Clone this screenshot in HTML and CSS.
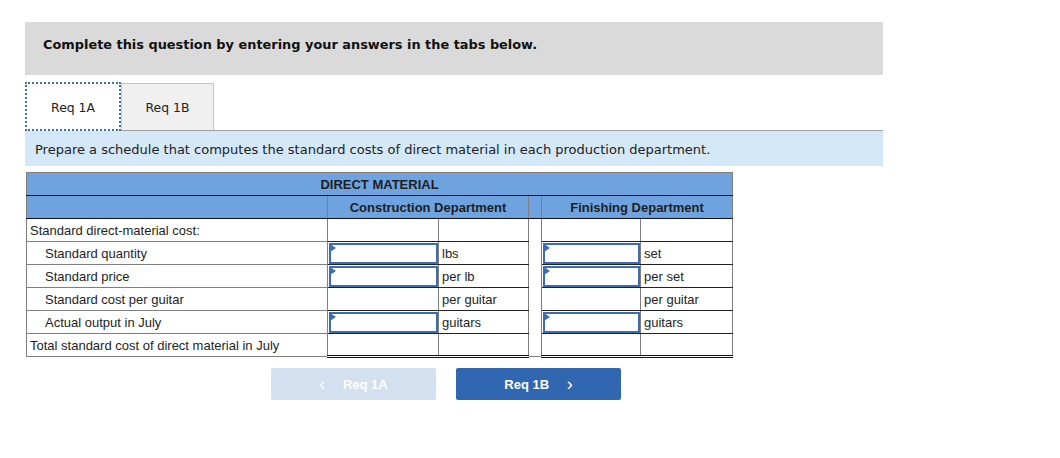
FILE: index.html
```html
<!DOCTYPE html>
<html lang="en">
<head>
    <meta charset="UTF-8">
    <title>Req 1A</title>
    <link rel="stylesheet" href="styles.css">
</head>
<body>
<div class="page">
    <div class="intro">Complete this question by entering your answers in the tabs below.</div>

    <div class="tabs">
        <div class="tab active">Req 1A</div>
        <div class="tab">Req 1B</div>
    </div>

    <div class="task">Prepare a schedule that computes the standard costs of direct material in each production department.</div>

    <table class="sheet">
        <colgroup>
            <col class="c-label">
            <col class="c-in1">
            <col class="c-unit1">
            <col class="c-gap">
            <col class="c-in2">
            <col class="c-unit2">
        </colgroup>
        <tr class="head">
            <th colspan="6">DIRECT MATERIAL</th>
        </tr>
        <tr class="head">
            <th></th>
            <th colspan="2">Construction Department</th>
            <th class="gap"></th>
            <th colspan="2">Finishing Department</th>
        </tr>
        <tr>
            <td class="label">Standard direct-material cost:</td>
            <td class="val"></td>
            <td class="val"></td>
            <td class="gap"></td>
            <td class="val"></td>
            <td class="val"></td>
        </tr>
        <tr>
            <td class="label sub">Standard quantity</td>
            <td class="val"><div class="inp"></div></td>
            <td class="val unit">lbs</td>
            <td class="gap"></td>
            <td class="val"><div class="inp"></div></td>
            <td class="val unit">set</td>
        </tr>
        <tr>
            <td class="label sub">Standard price</td>
            <td class="val"><div class="inp"></div></td>
            <td class="val unit">per lb</td>
            <td class="gap"></td>
            <td class="val"><div class="inp"></div></td>
            <td class="val unit">per set</td>
        </tr>
        <tr>
            <td class="label sub">Standard cost per guitar</td>
            <td class="val"></td>
            <td class="val unit">per guitar</td>
            <td class="gap"></td>
            <td class="val"></td>
            <td class="val unit">per guitar</td>
        </tr>
        <tr>
            <td class="label sub">Actual output in July</td>
            <td class="val"><div class="inp"></div></td>
            <td class="val unit">guitars</td>
            <td class="gap"></td>
            <td class="val"><div class="inp"></div></td>
            <td class="val unit">guitars</td>
        </tr>
        <tr class="total">
            <td class="label">Total standard cost of direct material in July</td>
            <td class="val"></td>
            <td class="val"></td>
            <td class="gap"></td>
            <td class="val"></td>
            <td class="val"></td>
        </tr>
    </table>

    <div class="nav">
        <button class="btn prev" disabled><span class="arrow">&lsaquo;</span> Req 1A</button>
        <button class="btn next">Req 1B <span class="arrow">&rsaquo;</span></button>
    </div>
</div>
</body>
</html>
```

FILE: styles.css
```css
body {
    margin: 0;
    padding: 0;
    background: #fff;
    font-family: "Liberation Sans", Arial, sans-serif;
    color: #222;
}
.page {
    margin: 22px 0 0 25px;
    width: 858px;
}
.intro {
    background-color: #dadada;
    height: 53px;
    line-height: 45px;
    padding-left: 18px;
    font-family: "DejaVu Sans", Verdana, sans-serif;
    font-weight: bold;
    font-size: 12.9px;
    color: #111;
}
.tabs {
    display: flex;
    align-items: flex-end;
    margin-top: 7px;
    border-bottom: 1px solid #a0a0a0;
}
.tab {
    font-family: "DejaVu Sans", Verdana, sans-serif;
    font-size: 12.4px;
    color: #222;
    box-sizing: border-box;
    text-align: center;
}
.tab.active {
    width: 96px;
    height: 49px;
    line-height: 47px;
    border: 2px dotted #3f6fb3;
    background: #fff;
    margin-bottom: -1px;
}
.tab + .tab {
    width: 93px;
    height: 47px;
    line-height: 47px;
    background: #f0f0f0;
    border: 1px solid #c6c6c6;
    border-bottom: none;
}
.task {
    background-color: #d5e8f7;
    height: 35px;
    line-height: 37px;
    padding-left: 10px;
    font-family: "DejaVu Sans", Verdana, sans-serif;
    font-size: 13px;
    color: #222;
}
.sheet {
    margin-top: 6px;
    margin-left: 1px;
    border-collapse: collapse;
    width: 707px;
    table-layout: fixed;
    font-size: 13px;
    border: 1px solid #7f7f7f;
}
.c-label { width: 301px; }
.c-in1 { width: 111px; }
.c-unit1 { width: 90px; }
.c-gap { width: 13px; }
.c-in2 { width: 99px; }
.c-unit2 { width: 92px; }

.head th {
    background-color: #6fa3e0;
    font-weight: bold;
    font-size: 13px;
    color: #1e1e1e;
    height: 22px;
    padding: 0;
    border-bottom: 1px solid #111;
    border-left: 1px solid #7f7f7f;
    text-align: center;
}
.head th.gap {
    border-left: 1px solid #7f7f7f;
    border-right: 1px solid #7f7f7f;
}
.sheet td {
    height: 22px;
    padding: 0;
    border-left: 1px solid #7f7f7f;
    border-bottom: 1px solid #7f7f7f;
}
.sheet td.label {
    padding-left: 3px;
    color: #1e1e1e;
}
.sheet td.sub {
    padding-left: 18px;
}
.sheet td.val {
    border-bottom-color: #222;
    position: relative;
}
.sheet td.unit {
    padding-left: 3px;
    color: #1e1e1e;
}
.sheet td.gap {
    border-bottom: none;
    border-right: 1px solid #7f7f7f;
}
.sheet tr.total td {
    height: 21px;
}
.sheet tr.total td.val {
    border-bottom: 3px double #111;
}
.inp {
    position: absolute;
    left: 1px;
    top: 1px;
    right: 0;
    bottom: 0;
    border: 2px solid #3c6db0;
    background: #fff;
}
.inp::before {
    content: "";
    position: absolute;
    left: -1px;
    top: -1px;
    border-top: 4px solid transparent;
    border-bottom: 4px solid transparent;
    border-left: 6px solid #3c6db0;
}
.nav {
    display: flex;
    gap: 20px;
    margin-top: 10px;
    margin-left: 246px;
}
.btn {
    width: 165px;
    height: 32px;
    border: none;
    border-radius: 2px;
    font-family: "Liberation Sans", Arial, sans-serif;
    font-weight: bold;
    font-size: 13px;
    color: #fff;
    padding: 0;
}
.btn .arrow {
    font-size: 18px;
    font-weight: normal;
    vertical-align: -1px;
}
.btn.prev {
    background-color: #d2e0ef;
}
.btn.prev .arrow {
    margin-right: 14px;
}
.btn.next {
    background-color: #3067b0;
}
.btn.next .arrow {
    margin-left: 14px;
}
```
